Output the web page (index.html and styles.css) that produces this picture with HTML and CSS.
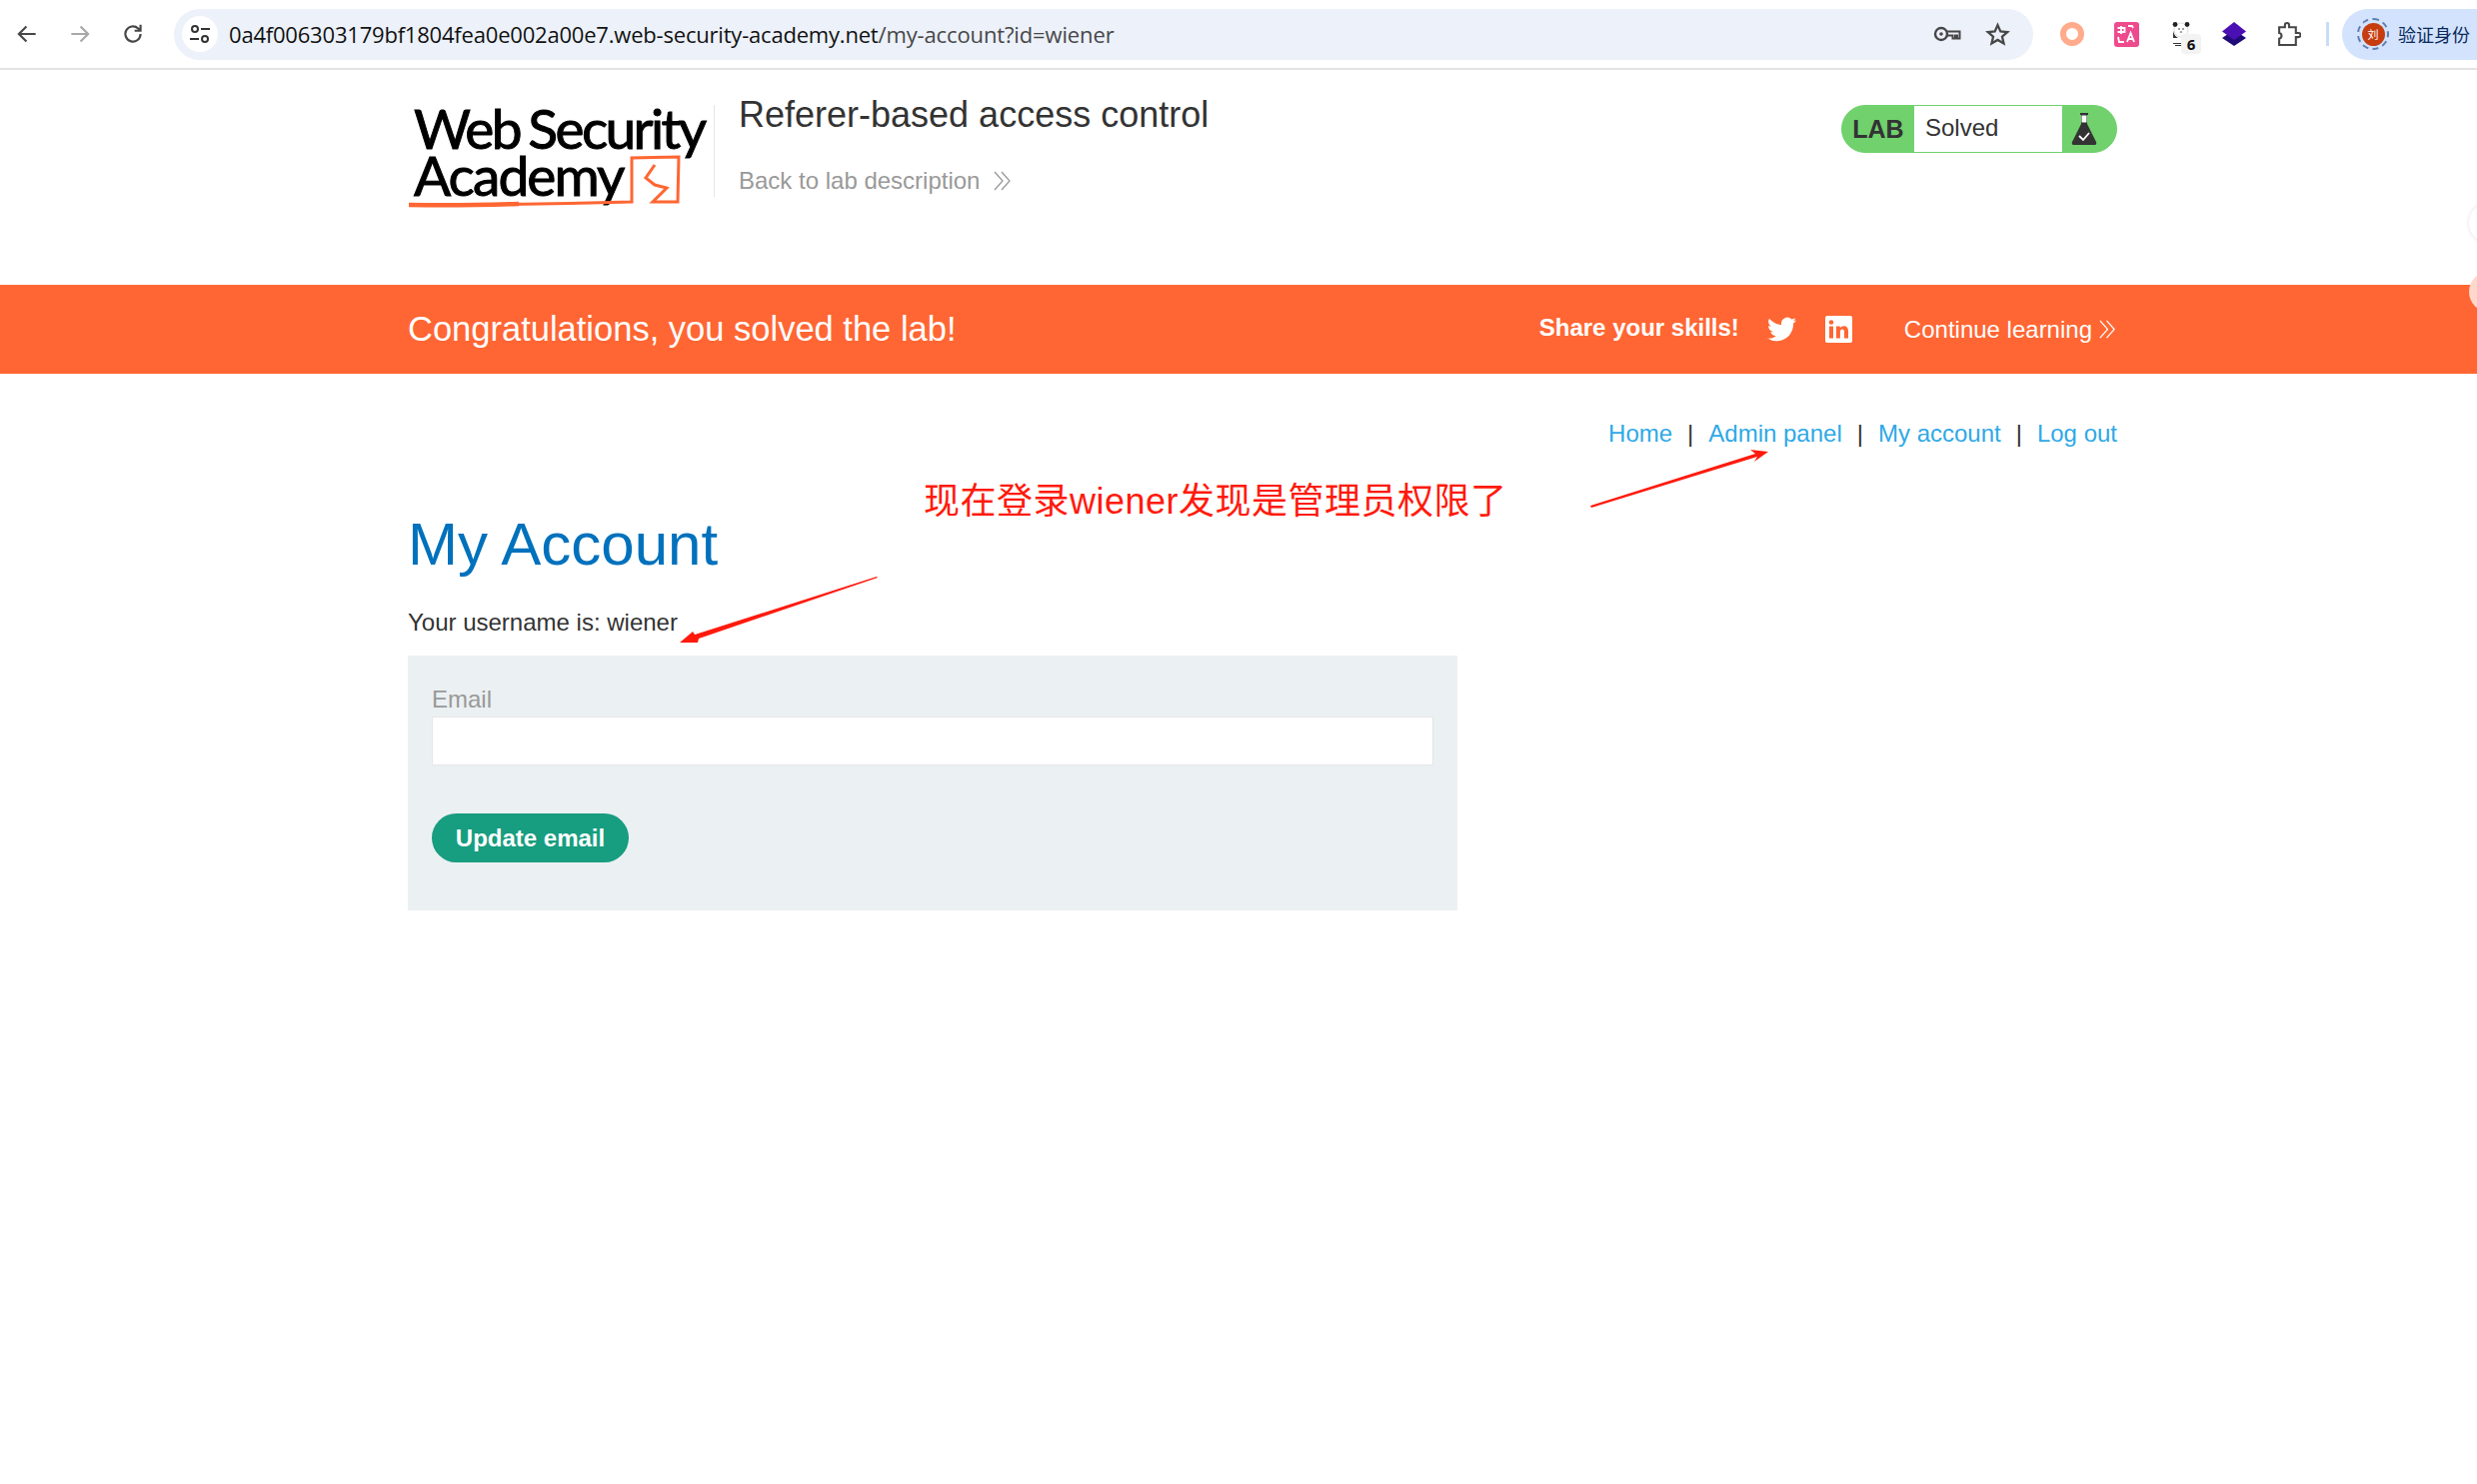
FILE: index.html
```html
<!DOCTYPE html>
<html lang="en">
<head>
    <meta charset="UTF-8">
    <title>Referer-based access control</title>
    <link rel="stylesheet" href="styles.css">
</head>
<body>
    <div class="chrome">
        <div class="nav-icons">
            <svg class="nav-icon" viewBox="0 0 24 24"><path d="M20 12H5M11.5 5L4.5 12l7 7" fill="none" stroke="#474747" stroke-width="2"/></svg>
            <svg class="nav-icon" viewBox="0 0 24 24"><path d="M4 12h15M12.5 5l7 7-7 7" fill="none" stroke="#a8a8a8" stroke-width="2"/></svg>
            <svg class="nav-icon" viewBox="0 0 24 24"><path d="M19 12a7 7 0 1 1-2.2-5.1L19 9M19 3.5V9h-5.5" fill="none" stroke="#474747" stroke-width="2"/></svg>
        </div>
        <div class="omnibox">
            <div class="site-info">
                <svg viewBox="0 0 24 24" width="24" height="24"><circle cx="7" cy="7" r="3" fill="none" stroke="#333" stroke-width="2"/><path d="M13 7h9M2 17h9" stroke="#333" stroke-width="2"/><circle cx="17" cy="17" r="3" fill="none" stroke="#333" stroke-width="2"/></svg>
            </div>
            <div class="url"><span class="url-host">0a4f006303179bf1804fea0e002a00e7.web-security-academy.net</span>/my-account?id=wiener</div>
            <svg class="omni-key" viewBox="0 0 28 18" width="28" height="18"><circle cx="8" cy="9" r="6" fill="none" stroke="#474747" stroke-width="2.400"/><circle cx="8" cy="9" r="1.800" fill="#474747"/><path d="M14 6.500h12.500v7h-2.500v-3h-2v3h-2.500v-3H14" fill="none" stroke="#474747" stroke-width="2"/></svg>
            <svg class="omni-star" viewBox="0 0 24 24" width="25" height="25"><path d="M12 3l2.700 6.100 6.600.6-5 4.400 1.500 6.500L12 17.200l-5.800 3.400 1.500-6.500-5-4.400 6.600-.6z" fill="none" stroke="#474747" stroke-width="2.200"/></svg>
        </div>
        <div class="extensions">
            <span class="ext-ring"></span>
            <span class="ext-translate">
                <svg viewBox="0 0 24 24" width="24" height="24"><path d="M7 4v8M3.500 6h7v4h-7M14 4h4l1 2M4 15l1 5h5M13 20l3.500-9 3.500 9M14.500 17h4" fill="none" stroke="#fff" stroke-width="1.800"/></svg>
            </span>
            <span class="ext-panda">
                <svg viewBox="0 0 18 24" width="18" height="24"><circle cx="9" cy="8" r="7" fill="#fff" stroke="#bbb" stroke-width="0.500"/><circle cx="3" cy="2.500" r="2.400" fill="#222"/><circle cx="15" cy="2.500" r="2.400" fill="#222"/><path d="M1 9c1 4 3 6 5 7H1zM1 21h12v1H1zM3 23h9v1H3z" fill="#333"/><path d="M6 7h2M10 7h2M8 10h2" stroke="#444" stroke-width="1.200"/></svg>
                <span class="ext-badge">6</span>
            </span>
            <svg class="ext-diamond" viewBox="0 0 24 24" width="24" height="24"><path d="M12 8l12 8-12 8L0 16z" fill="#1f0a78"/><path d="M12 0l12 9.500-12 8.500L0 9.500z" fill="#4b10b4"/></svg>
            <svg class="ext-puzzle" viewBox="0 0 24 24" width="25" height="25"><path d="M3 5h5.500V3a2 2 0 0 1 4 0v2H19v5.500h2.500a2 2 0 0 1 0 4H19V22H3v-6a2.800 2.800 0 0 0 0-5.500z" fill="none" stroke="#474747" stroke-width="2"/></svg>
            <span class="ext-sep"></span>
        </div>
        <div class="profile">
            <span class="avatar"><span class="avatar-inner">刘</span></span>
            <span class="profile-name">验证身份</span>
        </div>
    </div>

    <header class="lab-header">
        <div class="logo">
            <div class="logo-line">Web Security</div>
            <div class="logo-line logo-line-two">Academy</div>
            <svg class="logo-mark" viewBox="0 0 290 60" width="290" height="60"><path d="M1 50q110 0 223-3V3l47-1-1 45h-25l14-14-12-3-9-7 9-13" fill="none" stroke="#ff6633" stroke-width="3"/><path d="M1 50q50 1 110-1" fill="none" stroke="#ff6633" stroke-width="4.500"/></svg>
        </div>
        <div class="lab-title">
            <h2>Referer-based access control</h2>
            <a class="back-link" href="#">Back to lab description
                <svg class="chevrons" viewBox="0 0 20 20" width="20" height="20"><path d="M2 1l8 9-8 9M9 1l8 9-8 9" fill="none" stroke="currentColor" stroke-width="1.300"/></svg>
            </a>
        </div>
        <div class="lab-status">
            <span class="status-lab">LAB</span>
            <span class="status-text">Solved</span>
            <span class="status-icon">
                <svg viewBox="0 0 26 34" width="26" height="34"><path d="M9 1h8v2h-1v9l9 18a2 2 0 0 1-2 3H3a2 2 0 0 1-2-3l9-18V3H9z" fill="#333"/><rect x="10.500" y="3.500" width="5" height="7" fill="#fff"/><path d="M8 24l4 4 6-7" fill="none" stroke="#fff" stroke-width="1.800"/></svg>
            </span>
        </div>
    </header>

    <div class="banner">
        <div class="banner-inner">
            <span class="banner-msg">Congratulations, you solved the lab!</span>
            <div class="banner-right">
                <span class="share">Share your skills!</span>
                <svg class="icon-twitter" viewBox="0 0 24 24" width="29" height="29"><path fill="#fff" d="M23.953 4.570a10 10 0 0 1-2.825.775 4.958 4.958 0 0 0 2.163-2.723c-.951.555-2.005.959-3.127 1.184a4.920 4.920 0 0 0-8.384 4.482C7.690 8.095 4.067 6.130 1.640 3.162a4.822 4.822 0 0 0-.666 2.475c0 1.710.870 3.213 2.188 4.096a4.904 4.904 0 0 1-2.228-.616v.060a4.923 4.923 0 0 0 3.946 4.827 4.996 4.996 0 0 1-2.212.085 4.936 4.936 0 0 0 4.604 3.417 9.867 9.867 0 0 1-6.102 2.105c-.390 0-.779-.023-1.170-.067a13.995 13.995 0 0 0 7.557 2.209c9.053 0 13.998-7.496 13.998-13.985 0-.210 0-.420-.015-.630A9.935 9.935 0 0 0 24 4.590z"/></svg>
                <svg class="icon-linkedin" viewBox="0 0 27 27" width="27" height="27"><rect width="27" height="27" rx="2" fill="#fff"/><rect x="4" y="10.500" width="4" height="12" fill="#ff6633"/><circle cx="6" cy="6.500" r="2.300" fill="#ff6633"/><path d="M11 10.500h3.800v1.800c.8-1.300 2.200-2.100 3.900-2.100 3 0 4.300 2 4.300 5v7.300h-4v-6.500c0-1.600-.6-2.500-1.900-2.500-1.400 0-2.200 1-2.200 2.500v6.500H11z" fill="#ff6633"/></svg>
                <a class="continue" href="#">Continue learning
                    <svg class="chevrons" viewBox="0 0 20 20" width="19" height="19"><path d="M2 1l8 9-8 9M9 1l8 9-8 9" fill="none" stroke="#fff" stroke-width="1.300"/></svg>
                </a>
            </div>
        </div>
    </div>

    <main class="content">
        <nav class="top-links">
            <a href="#">Home</a><span class="sep">|</span>
            <a href="#">Admin panel</a><span class="sep">|</span>
            <a href="#">My account</a><span class="sep">|</span>
            <a href="#">Log out</a>
        </nav>
        <h1>My Account</h1>
        <p class="username">Your username is: wiener</p>
        <form class="email-form">
            <label for="email">Email</label>
            <input type="email" id="email" name="email">
            <button type="button" class="update-btn">Update email</button>
        </form>
    </main>

    <!-- screenshot annotations drawn on top of the page -->
    <div class="note">现在登录wiener发现是管理员权限了</div>
    <svg class="arrows" viewBox="0 0 2478 1485" width="2478" height="1485">
        <polygon fill="#ff1a0d" points="1591,506 1756,454 1751,450 1769,452 1755,462 1758,457 1592,508"/>
        <polygon fill="#ff1a0d" points="877,577 878,578 699,639 698,643 680,643 693,632 695,635"/>
    </svg>
    <span class="edge-dot edge-dot-a"></span>
    <span class="edge-dot edge-dot-b"></span>
</body>
</html>
```

FILE: styles.css
```css
html, body {
    margin: 0;
    padding: 0;
    height: 100%;
    overflow: hidden;
    background-color: #fff;
}
body {
    position: relative;
    font-family: "Liberation Sans", Arial, sans-serif;
    color: #333;
}
a {
    text-decoration: none;
}

/* browser toolbar */
.chrome {
    display: flex;
    align-items: center;
    height: 68px;
    border-bottom: 2px solid #e3e3e3;
    background-color: #fff;
}
.chrome > * {
    flex-shrink: 0;
}
.nav-icons {
    display: flex;
    gap: 27px;
    width: 174px;
    padding-left: 14px;
    box-sizing: border-box;
}
.nav-icon {
    width: 26px;
    height: 26px;
}
.omnibox {
    display: flex;
    align-items: center;
    width: 1860px;
    height: 51px;
    box-sizing: border-box;
    padding-left: 8px;
    border-radius: 26px;
    background-color: #ecf1fa;
}
.site-info {
    display: flex;
    align-items: center;
    justify-content: center;
    width: 36px;
    height: 36px;
    border-radius: 50%;
    background-color: #fff;
}
.url {
    flex: 1;
    margin-left: 11px;
    margin-top: -1px;
    font-family: "Open Sans", sans-serif;
    font-size: 22px;
    color: #474747;
    letter-spacing: -0.13px;
    white-space: nowrap;
}
.url-host {
    color: #111;
    letter-spacing: -0.2px;
}
.omni-key {
    margin-right: 24px;
}
.omni-star {
    margin-right: 23px;
}
.extensions {
    display: flex;
    align-items: center;
    margin-left: 27px;
}
.ext-ring {
    width: 12px;
    height: 12px;
    margin-right: 30px;
    border: 6px solid #ffab8c;
    border-radius: 50%;
}
.ext-translate {
    display: flex;
    width: 25px;
    height: 25px;
    margin-right: 33px;
    border-radius: 3px;
    background-color: #ee4b8e;
}
.ext-panda {
    position: relative;
    display: flex;
    width: 18px;
    margin-right: 32px;
}
.ext-badge {
    position: absolute;
    left: 9px;
    top: 12px;
    width: 20px;
    height: 20px;
    border-radius: 4px;
    background-color: #f3f3f3;
    font-family: "Noto Sans", sans-serif;
    font-weight: 700;
    font-size: 15px;
    line-height: 20px;
    text-align: center;
    color: #111;
}
.ext-diamond {
    margin-right: 30px;
}
.ext-puzzle {
    margin-right: 25px;
}
.ext-sep {
    width: 3px;
    height: 24px;
    background-color: #c9dcf7;
}
.profile {
    display: flex;
    align-items: center;
    width: 170px;
    height: 51px;
    margin-left: 13px;
    padding-left: 15px;
    box-sizing: border-box;
    border-radius: 26px;
    background-color: #d3e3fd;
}
.avatar {
    display: flex;
    align-items: center;
    justify-content: center;
    width: 28px;
    height: 28px;
    border: 2px dashed #5f7fb0;
    border-radius: 50%;
}
.avatar-inner {
    width: 23px;
    height: 23px;
    border-radius: 50%;
    background-color: #c63d0f;
    color: #fff;
    font-family: "Noto Sans CJK SC", sans-serif;
    font-size: 11px;
    line-height: 23px;
    text-align: center;
}
.profile-name {
    margin-left: 9px;
    font-family: "Noto Sans CJK SC", sans-serif;
    font-size: 18px;
    color: #0b2a5b;
    white-space: nowrap;
}

/* lab header */
.lab-header {
    display: flex;
    align-items: flex-start;
    width: 1710px;
    height: 215px;
    margin-left: 408px;
}
.logo {
    position: relative;
    width: 306px;
    height: 92px;
    margin-top: 35px;
    border-right: 1px solid #e6e6e6;
}
.logo-line {
    padding-left: 6px;
    font-family: "Lato", sans-serif;
    font-size: 55px;
    line-height: 46px;
    letter-spacing: -2.6px;
    word-spacing: -3px;
    color: #000;
    -webkit-text-stroke: 1px #000;
    white-space: nowrap;
}
.logo-line-two {
    margin-top: 1px;
    letter-spacing: -1.9px;
}
.logo-mark {
    position: absolute;
    left: 0;
    top: 50px;
}
.lab-title {
    flex: 1;
    margin-left: 24px;
}
.lab-title h2 {
    margin: 24px 0 0;
    font-weight: 400;
    font-size: 36px;
    line-height: 42px;
    color: #333;
}
.back-link {
    display: flex;
    align-items: center;
    gap: 13px;
    margin-top: 30px;
    font-size: 24px;
    line-height: 30px;
    color: #999;
}
.lab-status {
    display: flex;
    align-items: stretch;
    width: 276px;
    height: 48px;
    margin-top: 35px;
    box-sizing: border-box;
    border: 1px solid #70d16d;
    border-radius: 24px;
    background-color: #70d16d;
    overflow: hidden;
}
.status-lab {
    width: 72px;
    font-weight: 700;
    font-size: 25px;
    line-height: 46px;
    text-align: center;
    color: #333;
}
.status-text {
    width: 137px;
    padding-left: 11px;
    background-color: #fff;
    font-size: 24px;
    line-height: 44px;
    color: #333;
}
.status-icon {
    display: flex;
    flex: 1;
    align-items: center;
    justify-content: center;
    padding-right: 10px;
}

/* solved banner */
.banner {
    height: 89px;
    background-color: #ff6633;
    color: #fff;
}
.banner-inner {
    display: flex;
    align-items: center;
    justify-content: space-between;
    width: 1710px;
    height: 100%;
    margin-left: 408px;
}
.banner-msg {
    font-size: 34.500px;
}
.banner-right {
    display: flex;
    align-items: center;
}
.share {
    font-weight: 700;
    font-size: 24px;
    margin-top: -3px;
}
.icon-twitter {
    margin-left: 28px;
}
.icon-linkedin {
    margin-left: 29px;
}
.continue {
    display: flex;
    align-items: center;
    gap: 6px;
    margin-left: 52px;
    font-size: 24px;
    color: #fff;
}

/* page body */
.content {
    width: 1710px;
    margin-left: 408px;
}
.top-links {
    display: flex;
    justify-content: flex-end;
    align-items: center;
    height: 30px;
    padding-top: 45px;
    font-size: 24px;
}
.top-links a {
    color: #2fa9e6;
}
.sep {
    margin: 0 15px;
    color: #333;
}
h1 {
    margin: 61px 0 0;
    font-weight: 400;
    font-size: 60px;
    line-height: 70px;
    color: #0071bc;
}
.username {
    margin: 28px 0 0;
    font-size: 24px;
    line-height: 30px;
}
.email-form {
    display: flex;
    flex-direction: column;
    align-items: flex-start;
    width: 1050px;
    height: 255px;
    margin-top: 18px;
    box-sizing: border-box;
    padding: 30px 24px 0;
    background-color: #ebf0f2;
}
.email-form label {
    font-size: 24px;
    line-height: 28px;
    color: #999;
}
.email-form input {
    width: 100%;
    height: 49px;
    margin-top: 3px;
    box-sizing: border-box;
    border: 1px solid #e6e6e6;
    background-color: #fff;
}
.update-btn {
    width: 197px;
    height: 49px;
    margin-top: 48px;
    padding: 0;
    border: none;
    border-radius: 25px;
    background-color: #179d80;
    font-family: "Liberation Sans", Arial, sans-serif;
    font-weight: 700;
    font-size: 24px;
    color: #fff;
}

/* annotations */
.note {
    position: absolute;
    left: 924px;
    top: 479px;
    font-family: "Liberation Sans", "Noto Sans CJK SC", sans-serif;
    font-size: 36px;
    line-height: 46px;
    letter-spacing: 0.5px;
    color: #ff1a0d;
    white-space: nowrap;
}
.arrows {
    position: absolute;
    left: 0;
    top: 0;
    pointer-events: none;
}
.edge-dot {
    position: absolute;
    left: 2470px;
    width: 40px;
    height: 40px;
    border-radius: 50%;
}
.edge-dot-a {
    top: 203px;
    background-color: #fff;
    box-shadow: 0 0 4px rgba(0, 0, 0, 0.12);
}
.edge-dot-b {
    top: 272px;
    background-color: #ffd8cc;
}
```
